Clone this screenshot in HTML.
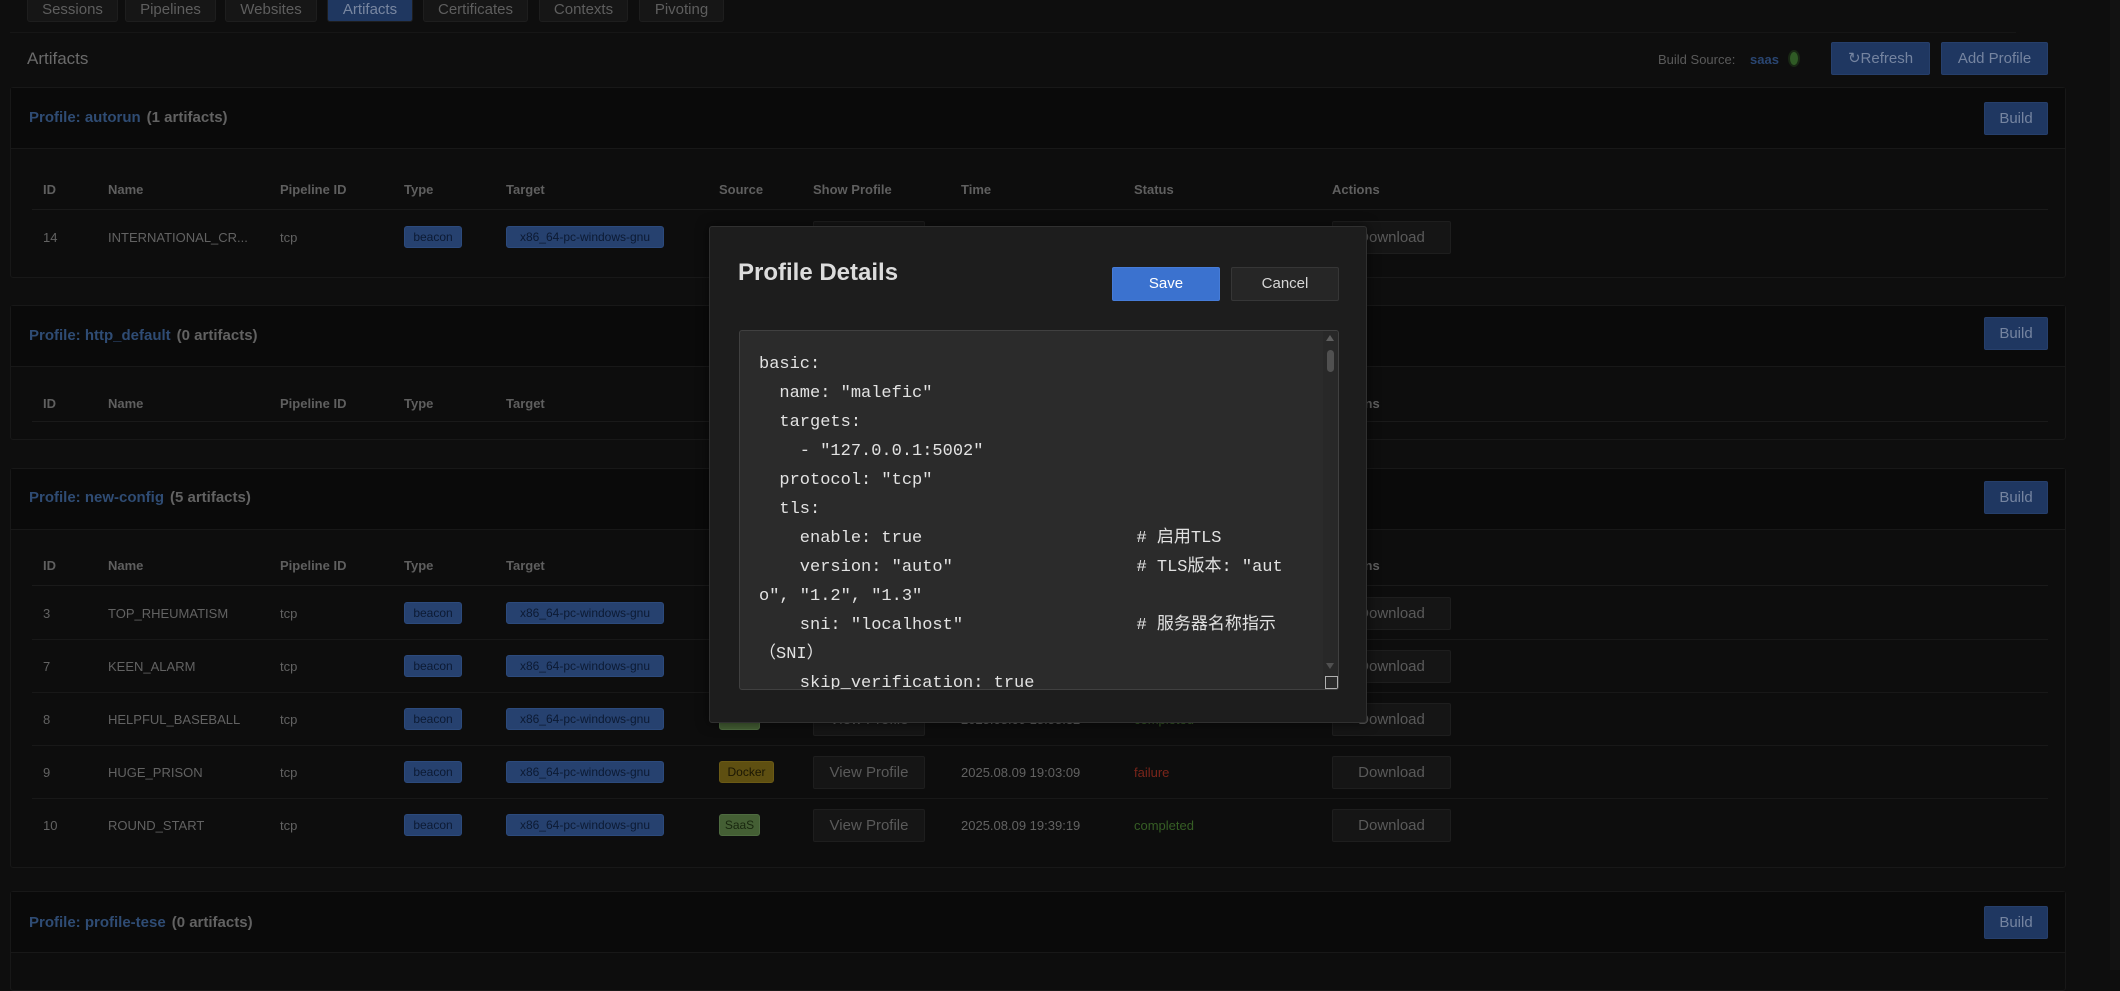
<!DOCTYPE html>
<html><head><meta charset="utf-8">
<style>
*{box-sizing:border-box;margin:0;padding:0}
body{width:2120px;height:970px;background:#0e0e0e;font-family:"Liberation Sans","Noto Sans CJK SC",sans-serif;color:#6c6c6c;position:relative;overflow:hidden;font-size:13px}
.a{position:absolute}
.tab{position:absolute;top:0;height:22px;background:#161616;border:1px solid #1e1e1e;border-top:none;border-radius:0 0 3px 3px;color:#5e5e5e;font-size:15px;line-height:20px;text-align:center}
.tab.on{background:#1f3760;color:#7886a0}
.btn{position:absolute;background:#1f3761;border:1px solid #263f6b;border-radius:2px;color:#7584a0;font-size:15px;text-align:center}
.panel{position:absolute;left:10px;width:2056px;border:1px solid #181818;background:#0d0d0d;border-radius:3px}
.ph{position:absolute;left:0;right:0;top:0;background:#0a0a0a;border-bottom:1px solid #181818}
.pt{position:absolute;left:18px;font-weight:bold;font-size:15px;color:#2f4c74}
.pt span{color:#626262;margin-left:6px}
.th{position:absolute;left:21px;width:2016px;height:40px;border-bottom:1px solid #1a1a1a;font-weight:bold;color:#5f5f5f;font-size:13px}
.th div,.tr>div{position:absolute;top:0}
.tr{position:absolute;left:21px;width:2016px;height:53px;border-bottom:1px solid #181818;line-height:53px;font-size:13px;color:#626262}
.bd{height:22px!important;line-height:21px;top:15px!important;border-radius:3px;font-size:12px;text-align:center;color:#0c1a33;background:#26416f;border:1px solid #2c4a7c}
.bt{height:33px;top:10px!important;line-height:31px;background:#151515;border:1px solid #1e1e1e;border-radius:2px;text-align:center;color:#5a5a5a;font-size:15px}
</style></head><body>

<div class="tab" style="left:27px;width:91px">Sessions</div>
<div class="tab" style="left:125px;width:91px">Pipelines</div>
<div class="tab" style="left:225px;width:92px">Websites</div>
<div class="tab on" style="left:327px;width:86px">Artifacts</div>
<div class="tab" style="left:423px;width:105px">Certificates</div>
<div class="tab" style="left:539px;width:89px">Contexts</div>
<div class="tab" style="left:639px;width:85px">Pivoting</div>
<div class="a" style="left:10px;top:32px;width:2006px;height:1px;background:#161616"></div>

<div class="a" style="left:27px;top:49px;font-size:17px;color:#6a6a6a">Artifacts</div>
<div class="a" style="left:1658px;top:52px;font-size:13px;color:#5a5a5a">Build Source:</div>
<div class="a" style="left:1750px;top:52px;font-size:13px;font-weight:bold;color:#2a4672">saas</div>
<div class="a" style="left:1788px;top:50px;width:12px;height:17px;border-radius:50%;background:#2f5a25;border:2px solid #182714"></div>
<div class="btn" style="left:1831px;top:42px;width:99px;height:33px;line-height:31px">↻Refresh</div>
<div class="btn" style="left:1941px;top:42px;width:107px;height:33px;line-height:31px">Add Profile</div>

<!-- panel 1 -->
<div class="panel" style="top:87px;height:191px">
 <div class="ph" style="height:61px"></div>
 <div class="pt" style="top:21px">Profile: autorun<span>(1 artifacts)</span></div>
 <div class="btn" style="left:1973px;top:14px;width:64px;height:33px;line-height:31px">Build</div>
 <div class="th" style="top:82px;line-height:40px"><div style="left:11px">ID</div><div style="left:76px">Name</div><div style="left:248px">Pipeline ID</div><div style="left:372px">Type</div><div style="left:474px">Target</div><div style="left:687px">Source</div><div style="left:781px">Show Profile</div><div style="left:929px">Time</div><div style="left:1102px">Status</div><div style="left:1300px">Actions</div></div>
 <div class="tr" style="top:123px;border:none"><div style="left:11px">14</div><div style="left:76px">INTERNATIONAL_CR...</div><div style="left:248px">tcp</div><div class="bd" style="left:372px;width:58px">beacon</div><div class="bd" style="left:474px;width:158px">x86_64-pc-windows-gnu</div><div class="bd" style="left:687px;width:41px;background:#445f34;border-color:#4e6b40;color:#18260e">SaaS</div><div class="bt" style="left:781px;width:112px">View Profile</div><div style="left:929px">2025.08.09 18:20:11</div><div style="left:1102px;color:#365e25">completed</div><div class="bt" style="left:1300px;width:119px">Download</div></div>
</div>

<!-- panel 2 -->
<div class="panel" style="top:305px;height:135px">
 <div class="ph" style="height:61px"></div>
 <div class="pt" style="top:21px">Profile: http_default<span>(0 artifacts)</span></div>
 <div class="btn" style="left:1973px;top:11px;width:64px;height:33px;line-height:31px">Build</div>
 <div class="th" style="top:78px;line-height:40px;height:38px"><div style="left:11px">ID</div><div style="left:76px">Name</div><div style="left:248px">Pipeline ID</div><div style="left:372px">Type</div><div style="left:474px">Target</div><div style="left:687px">Source</div><div style="left:781px">Show Profile</div><div style="left:929px">Time</div><div style="left:1102px">Status</div><div style="left:1300px">Actions</div></div>
</div>

<!-- panel 3 -->
<div class="panel" style="top:468px;height:400px">
 <div class="ph" style="height:61px"></div>
 <div class="pt" style="top:20px">Profile: new-config<span>(5 artifacts)</span></div>
 <div class="btn" style="left:1973px;top:12px;width:64px;height:33px;line-height:31px">Build</div>
 <div class="th" style="top:77px;line-height:40px"><div style="left:11px">ID</div><div style="left:76px">Name</div><div style="left:248px">Pipeline ID</div><div style="left:372px">Type</div><div style="left:474px">Target</div><div style="left:687px">Source</div><div style="left:781px">Show Profile</div><div style="left:929px">Time</div><div style="left:1102px">Status</div><div style="left:1300px">Actions</div></div>
 <div class="tr" style="top:118px"><div style="left:11px">3</div><div style="left:76px">TOP_RHEUMATISM</div><div style="left:248px">tcp</div><div class="bd" style="left:372px;width:58px">beacon</div><div class="bd" style="left:474px;width:158px">x86_64-pc-windows-gnu</div><div class="bd" style="left:687px;width:41px;background:#445f34;border-color:#4e6b40;color:#18260e">SaaS</div><div class="bt" style="left:781px;width:112px">View Profile</div><div style="left:929px">2025.08.09 18:40:12</div><div style="left:1102px;color:#365e25">completed</div><div class="bt" style="left:1300px;width:119px">Download</div></div>
 <div class="tr" style="top:171px"><div style="left:11px">7</div><div style="left:76px">KEEN_ALARM</div><div style="left:248px">tcp</div><div class="bd" style="left:372px;width:58px">beacon</div><div class="bd" style="left:474px;width:158px">x86_64-pc-windows-gnu</div><div class="bd" style="left:687px;width:41px;background:#445f34;border-color:#4e6b40;color:#18260e">SaaS</div><div class="bt" style="left:781px;width:112px">View Profile</div><div style="left:929px">2025.08.09 18:50:12</div><div style="left:1102px;color:#365e25">completed</div><div class="bt" style="left:1300px;width:119px">Download</div></div>
 <div class="tr" style="top:224px"><div style="left:11px">8</div><div style="left:76px">HELPFUL_BASEBALL</div><div style="left:248px">tcp</div><div class="bd" style="left:372px;width:58px">beacon</div><div class="bd" style="left:474px;width:158px">x86_64-pc-windows-gnu</div><div class="bd" style="left:687px;width:41px;background:#445f34;border-color:#4e6b40;color:#18260e">SaaS</div><div class="bt" style="left:781px;width:112px">View Profile</div><div style="left:929px">2025.08.09 18:58:32</div><div style="left:1102px;color:#365e25">completed</div><div class="bt" style="left:1300px;width:119px">Download</div></div>
 <div class="tr" style="top:277px"><div style="left:11px">9</div><div style="left:76px">HUGE_PRISON</div><div style="left:248px">tcp</div><div class="bd" style="left:372px;width:58px">beacon</div><div class="bd" style="left:474px;width:158px">x86_64-pc-windows-gnu</div><div class="bd" style="left:687px;width:55px;background:#5e4f11;border-color:#6b5a15;color:#1b1704">Docker</div><div class="bt" style="left:781px;width:112px">View Profile</div><div style="left:929px">2025.08.09 19:03:09</div><div style="left:1102px;color:#7a251a">failure</div><div class="bt" style="left:1300px;width:119px">Download</div></div>
 <div class="tr" style="top:330px;border:none"><div style="left:11px">10</div><div style="left:76px">ROUND_START</div><div style="left:248px">tcp</div><div class="bd" style="left:372px;width:58px">beacon</div><div class="bd" style="left:474px;width:158px">x86_64-pc-windows-gnu</div><div class="bd" style="left:687px;width:41px;background:#445f34;border-color:#4e6b40;color:#18260e">SaaS</div><div class="bt" style="left:781px;width:112px">View Profile</div><div style="left:929px">2025.08.09 19:39:19</div><div style="left:1102px;color:#365e25">completed</div><div class="bt" style="left:1300px;width:119px">Download</div></div>
</div>

<!-- panel 4 -->
<div class="panel" style="top:891px;height:100px">
 <div class="ph" style="height:61px"></div>
 <div class="pt" style="top:22px">Profile: profile-tese<span>(0 artifacts)</span></div>
 <div class="btn" style="left:1973px;top:14px;width:64px;height:33px;line-height:31px">Build</div>
</div>

<!-- page scrollbar -->
<div class="a" style="left:2110px;top:0;width:10px;height:970px;background:#121212"></div>

<!-- modal -->
<div class="a" style="left:709px;top:226px;width:658px;height:497px;background:#1d1d1d;border:1px solid #303030;border-radius:3px;box-shadow:0 0 12px rgba(0,0,0,.6)">
 <div class="a" style="left:28px;top:32px;font-size:24px;font-weight:bold;color:#dcdcdc">Profile Details</div>
 <div class="a" style="left:402px;top:40px;width:108px;height:34px;background:#3b72cf;border:1px solid #467cd8;border-radius:2px;color:#fff;font-size:15px;text-align:center;line-height:32px">Save</div>
 <div class="a" style="left:521px;top:40px;width:108px;height:34px;background:#262626;border:1px solid #363636;border-radius:2px;color:#d6d6d6;font-size:15px;text-align:center;line-height:32px">Cancel</div>
 <div class="a" style="left:29px;top:103px;width:600px;height:360px;background:#2b2b2b;border:1px solid #404040;border-radius:3px;overflow:hidden">
  <pre style="position:absolute;left:19px;top:19px;font-family:'Liberation Mono','Noto Sans CJK SC',monospace;font-size:17px;line-height:29px;color:#e2e2e2">basic:
  name: "malefic"
  targets:
    - "127.0.0.1:5002"
  protocol: "tcp"
  tls:
    enable: true                     # 启用TLS
    version: "auto"                  # TLS版本: "aut
o", "1.2", "1.3"
    sni: "localhost"                 # 服务器名称指示
（SNI）
    skip_verification: true</pre>
  <div class="a" style="right:0;top:0;width:15px;height:358px;background:#282828"></div>
  <div class="a" style="right:4px;top:4px;width:0;height:0;border-left:4px solid transparent;border-right:4px solid transparent;border-bottom:6px solid #5e5e5e"></div>
  <div class="a" style="right:4px;top:19px;width:7px;height:22px;background:#505050;border-radius:4px"></div>
  <div class="a" style="right:4px;top:332px;width:0;height:0;border-left:4px solid transparent;border-right:4px solid transparent;border-top:6px solid #505050"></div>
  <div class="a" style="right:0;bottom:0;width:13px;height:13px;border:1px solid #b0b0b0;background:#2b2b2b"></div>
 </div>
</div>
</body></html>
